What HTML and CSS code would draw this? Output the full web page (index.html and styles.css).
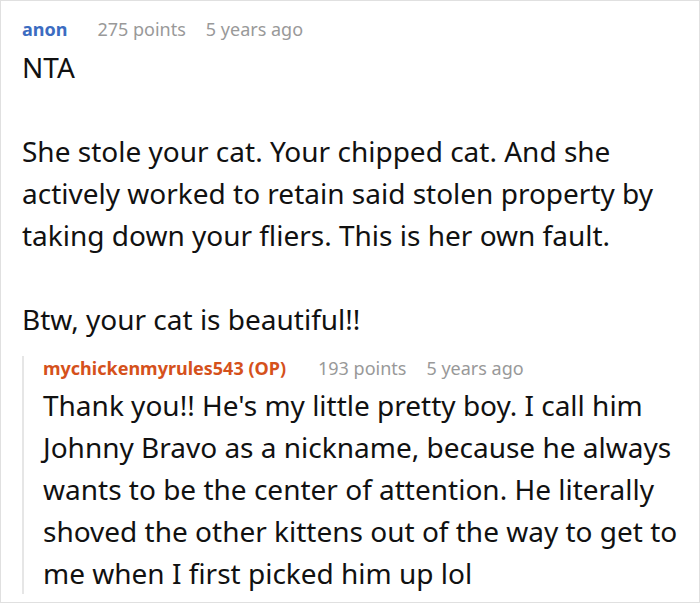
FILE: index.html
```html
<!DOCTYPE html>
<html>
<head>
<meta charset="utf-8">
<link rel="stylesheet" href="styles.css">
</head>
<body>
<div class="frame">
  <div class="comment">
    <div class="meta">
      <span class="user user-blue">anon</span><span class="points">275 points</span><span class="time">5 years ago</span>
    </div>
    <div class="body">
      <p>NTA</p>
      <p>She stole your cat. Your chipped cat. And she actively worked to retain said stolen property by taking down your fliers. This is her own fault.</p>
      <p>Btw, your cat is beautiful!!</p>
    </div>
    <div class="reply">
      <div class="meta meta-reply">
        <span class="user user-op">mychickenmyrules543 (OP)</span><span class="points">193 points</span><span class="time">5 years ago</span>
      </div>
      <div class="body body-reply">
        <p>Thank you!! He's my little pretty boy. I call him Johnny Bravo as a nickname, because he always wants to be the center of attention. He literally shoved the other kittens out of the way to get to me when I first picked him up lol</p>
      </div>
    </div>
  </div>
</div>
</body>
</html>
```

FILE: styles.css
```css
html, body {
  margin: 0;
  padding: 0;
  background: #fff;
}
.frame {
  box-sizing: border-box;
  width: 700px;
  height: 603px;
  border: 1px solid #e0e0e0;
  overflow: hidden;
  font-family: "Noto Sans", "Open Sans", sans-serif;
  color: #111;
}
.comment {
  padding: 16px 14px 0 21px;
}
.meta {
  font-size: 18px;
  line-height: 24px;
  color: #999;
  white-space: nowrap;
}
.user {
  font-weight: 700;
  margin-right: 30px;
}
.user-blue { color: #3c6cc1; }
.user-op {
  color: #d5511b;
  margin-right: 32px;
}
.points {
  margin-right: 20px;
}
.body {
  margin-top: 5px;
  font-size: 28px;
  line-height: 42px;
}
.body p {
  margin: 0 0 42px 0;
}
.body p:last-child {
  margin-bottom: 0;
}
.reply {
  margin-top: 27px;
  border-left: 2px solid #e6e6e6;
  padding-left: 19px;
}
.meta-reply {
  margin-top: -11px;
}
.body-reply {
  margin-top: 4px;
}
```
